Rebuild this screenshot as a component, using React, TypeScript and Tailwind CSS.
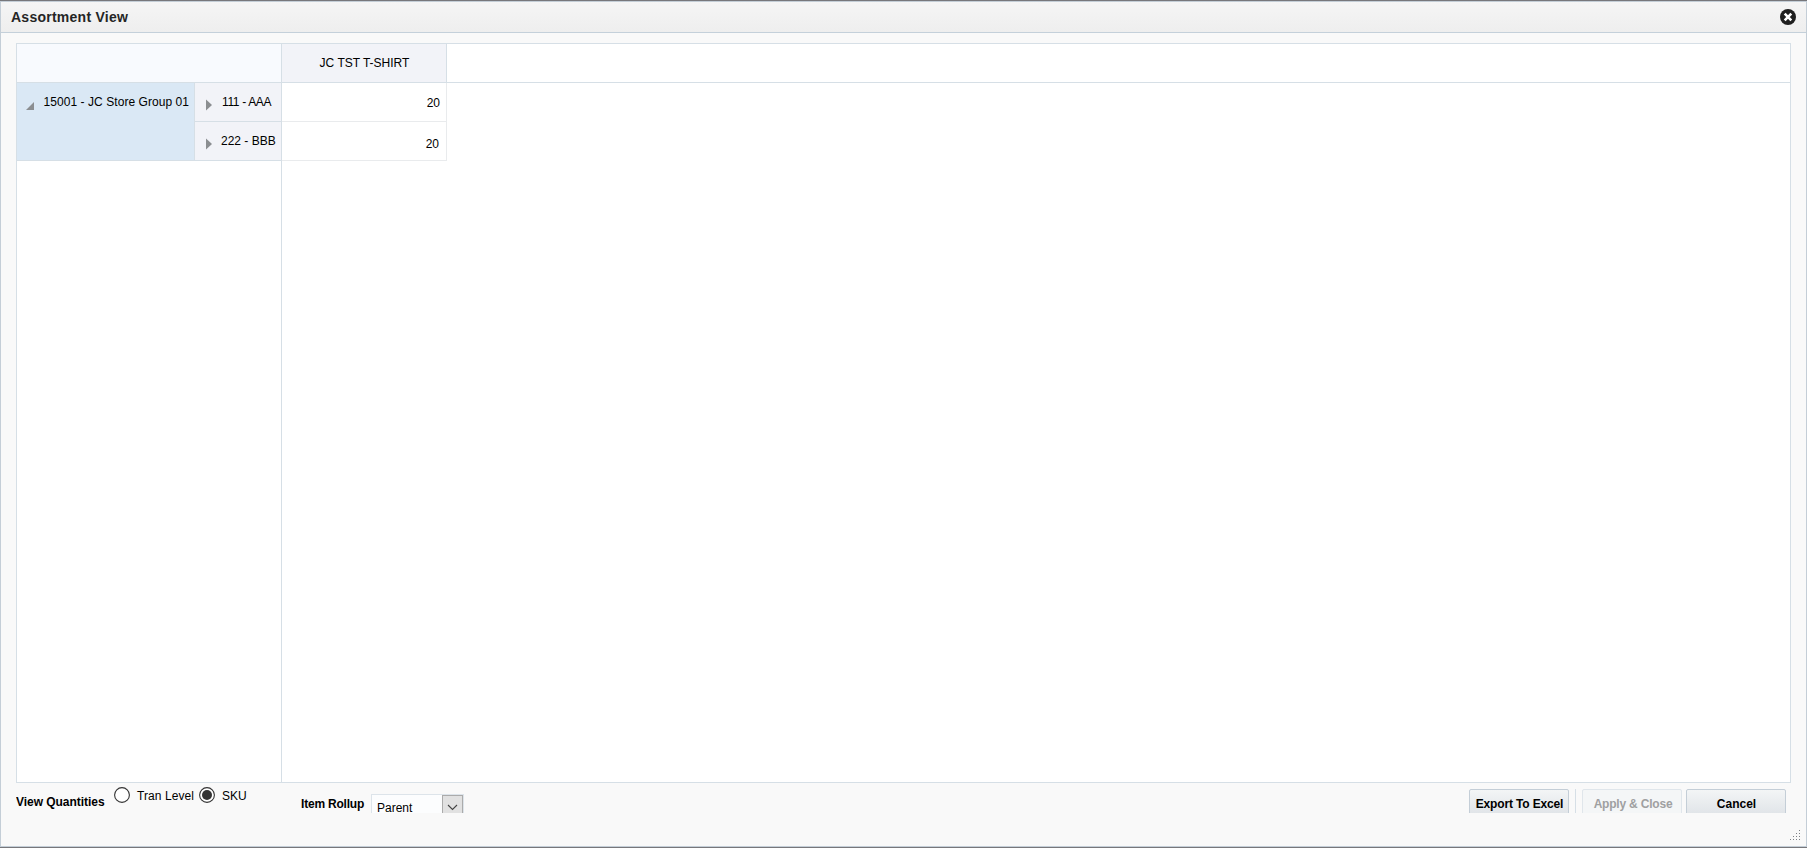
import { useState } from "react";

interface StoreRow {
  label: string;
  labelClass: string;
  quantity: number;
  quantityClass: string;
}

const ROWS: StoreRow[] = [
  {
    label: "111 - AAA",
    labelClass: "ml-[10px] tracking-[-0.35px]",
    quantity: 20,
    quantityClass: "pt-[13px] pr-[6px]",
  },
  {
    label: "222 - BBB",
    labelClass: "ml-[9px]",
    quantity: 20,
    quantityClass: "pt-[15px] pr-[7px]",
  },
];

const GRIP_DOTS = [
  [9, 0],
  [6, 3], [9, 3],
  [3, 6], [6, 6], [9, 6],
  [0, 9], [3, 9], [6, 9], [9, 9],
];

function CloseIcon() {
  return (
    <svg width="16" height="16" viewBox="0 0 16 16" aria-hidden="true">
      <circle cx="8" cy="8" r="8" fill="#1e1e1e" />
      <path d="M4.7 4.7l6.6 6.6M11.3 4.7l-6.6 6.6" stroke="#fff" strokeWidth="2.6" />
    </svg>
  );
}

function Radio({ checked, onSelect, label }: { checked: boolean; onSelect: () => void; label: string }) {
  return (
    <button
      role="radio"
      aria-checked={checked}
      aria-label={label}
      onClick={onSelect}
      className="mt-[4px] h-4 w-4 shrink-0"
    >
      <svg width="16" height="16" viewBox="0 0 16 16" className="block">
        <circle cx="8" cy="8" r="7.4" fill="#fff" stroke="#333" strokeWidth="1.1" />
        {checked && <circle cx="8" cy="8" r="5" fill="#333" />}
      </svg>
    </button>
  );
}

function AssortmentGrid() {
  return (
    <div className="flex h-[740px] flex-col border border-[#d6dfe6] bg-white">
      <div className="flex h-[39px] shrink-0 border-b border-[#d6dfe6]">
        <div className="w-[265px] border-r border-[#d6dfe6] bg-[#f8fafe]" />
        <div className="w-[165px] border-r border-[#d6dfe6] bg-[#f2f3f8] pt-[12px] pl-px text-center">
          JC TST T-SHIRT
        </div>
      </div>
      <div className="flex flex-1">
        <div className="w-[265px] border-r border-[#d6dfe6]">
          <div className="flex h-[78px] border-b border-[#d6dfe6]">
            <div className="flex w-[178px] border-r border-[#d6dfe6] bg-[#dae8f5]">
              <svg width="8" height="8" viewBox="0 0 8 8" className="mt-[19px] ml-[9px] shrink-0">
                <path d="M8 0v8H0z" fill="#8b8e91" />
              </svg>
              <span className="mt-[12px] ml-[9.5px] tracking-[0.06px] whitespace-nowrap">
                15001 - JC Store Group 01
              </span>
            </div>
            <div className="flex-1 bg-[#f2f3f8]">
              {ROWS.map((row) => (
                <div key={row.label} className="flex h-[39px] border-b border-[#d6dfe6]">
                  <svg width="6" height="12" viewBox="0 0 6 12" className="mt-[16px] ml-[11px] shrink-0">
                    <path d="M0 .5l6 5.5-6 5.5z" fill="#8b8e91" />
                  </svg>
                  <span className={`mt-[12px] whitespace-nowrap ${row.labelClass}`}>{row.label}</span>
                </div>
              ))}
            </div>
          </div>
        </div>
        <div className="w-[165px]">
          {ROWS.map((row) => (
            <div
              key={row.label}
              className={`h-[39px] border-r border-b border-[#e9ebed] text-right ${row.quantityClass}`}
            >
              {row.quantity}
            </div>
          ))}
        </div>
      </div>
    </div>
  );
}

export default function App() {
  const [level, setLevel] = useState<"tran" | "sku">("sku");

  return (
    <div className="flex h-[848px] w-[1807px] flex-col overflow-hidden border-y border-t-[#77777b] border-b-[#77777b] font-['Liberation_Sans',Arial,sans-serif] text-[12px] leading-[14px] text-black">
      <div className="flex flex-1 flex-col border border-[#c4ced7] bg-[#f9f9f9]">
        <header className="flex h-[31px] shrink-0 items-start justify-between border-b border-[#c4d0da] bg-linear-to-b from-[#f5f5f5] to-[#eeeeee] pt-[7px] pr-[10px] pl-[10px]">
          <h1 className="text-[14px] leading-4 font-bold tracking-[0.25px] text-[#252525]">Assortment View</h1>
          <button aria-label="Close">
            <CloseIcon />
          </button>
        </header>

        <main className="mt-[10px] mr-[15px] ml-[15px]">
          <AssortmentGrid />

          <footer className="flex h-[30px] items-start overflow-hidden">
            <span className="mt-[12px] w-[98px] font-bold tracking-[-0.04px] whitespace-nowrap">
              View Quantities
            </span>
            <Radio checked={level === "tran"} onSelect={() => setLevel("tran")} label="Tran Level" />
            <span className="mt-[6px] ml-[7px] w-[62px] tracking-[0.08px] whitespace-nowrap">Tran Level</span>
            <Radio checked={level === "sku"} onSelect={() => setLevel("sku")} label="SKU" />
            <span className="mt-[6px] ml-[7px] w-[79px]">SKU</span>
            <span className="mt-[14px] w-[70px] font-bold tracking-[-0.2px] whitespace-nowrap">Item Rollup</span>
            <div className="mt-[11px] flex h-[25px] w-[93px] shrink-0 border border-[#dde4ea] bg-[#fcfdfe]">
              <span className="mt-[8px] ml-[5px] flex-1 leading-[10px]">Parent</span>
              <span className="w-[21px] border border-[#ababab] bg-[#e1e1e1]">
                <svg width="19" height="21" viewBox="0 0 19 21">
                  <path d="M5 9l4.5 4.5L14 9" fill="none" stroke="#444" strokeWidth="1.1" />
                </svg>
              </span>
            </div>
            <div className="mr-[5px] ml-auto flex pt-[6px] font-bold">
              <button className="h-[28px] w-[100px] rounded-[2px] border border-[#c4ced7] bg-linear-to-b from-[#f3f5f6] to-[#dfe3e7] pt-[2px] pl-px tracking-[-0.15px] whitespace-nowrap">
                Export To Excel
              </button>
              <span className="mr-[6px] ml-[6px] w-px bg-[#d6dfe6]" />
              <button
                disabled
                className="h-[28px] w-[100px] rounded-[2px] border border-[#e0e6eb] bg-[#f4f6f7] pt-[2px] pl-[2px] tracking-[-0.2px] whitespace-nowrap text-[#9fa0a1]"
              >
                Apply &amp; Close
              </button>
              <button className="ml-[4px] h-[28px] w-[100px] rounded-[2px] border border-[#c4ced7] bg-linear-to-b from-[#f3f5f6] to-[#dfe3e7] pt-[2px] pl-px">
                Cancel
              </button>
            </div>
          </footer>
        </main>

        <div className="mt-auto mr-[6px] mb-[6px] flex justify-end">
          <svg width="10" height="10" viewBox="0 0 10 10" shapeRendering="crispEdges" className="block">
            {GRIP_DOTS.map(([x, y]) => (
              <rect key={`${x}-${y}`} x={x} y={y} width="1" height="1" fill="#7d8186" />
            ))}
          </svg>
        </div>
      </div>
    </div>
  );
}
